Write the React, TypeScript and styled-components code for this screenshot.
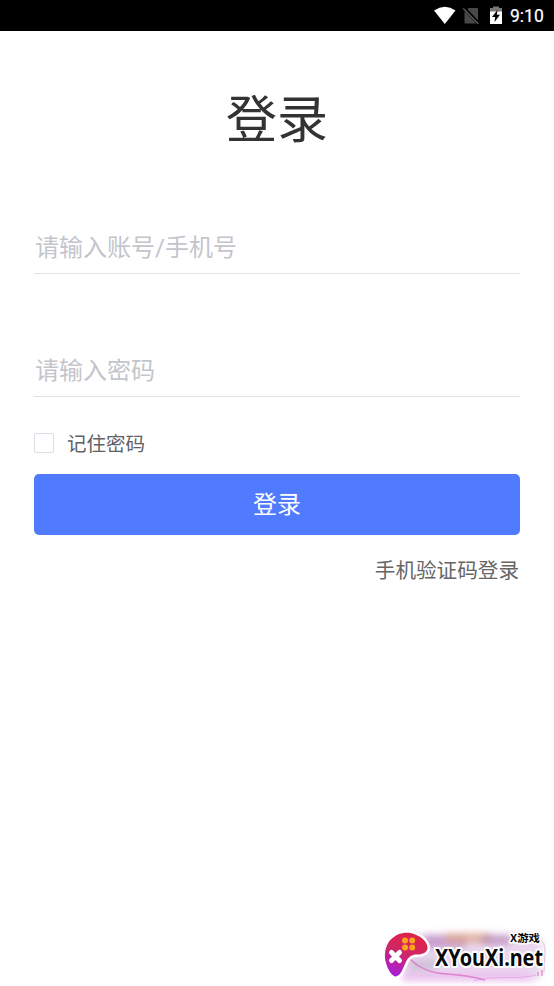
import React from "react";
import styled, { createGlobalStyle } from "styled-components";

const GlobalStyle = createGlobalStyle`
  * { box-sizing: border-box; }
  html, body { margin: 0; padding: 0; background: #fff; }
  body { font-family: Roboto, "Noto Sans CJK SC", sans-serif; overflow: hidden; }
`;

const Screen = styled.div`
  position: relative;
  width: 554px;
  height: 986px;
  background: #fff;
  overflow: hidden;
`;

const StatusBar = styled.header`
  display: flex;
  justify-content: flex-end;
  height: 31px;
  background: #000;
`;

const StatusIcons = styled.svg`
  display: block;
  width: 76px;
  height: 31px;
`;

const Clock = styled.span`
  width: 44px;
  line-height: 33px;
  font-size: 17.5px;
  font-weight: 400;
  -webkit-text-stroke: 0.2px #fff;
  color: #fff;
`;

const Form = styled.form`
  display: flex;
  flex-direction: column;
  padding: 0 34px;
`;

const Title = styled.h1`
  margin: 54px 0 0;
  height: 72px;
  line-height: 72px;
  text-align: center;
  font-size: 51px;
  font-weight: 400;
  color: #333;
`;

const Field = styled.input<{ $gap: number }>`
  display: block;
  width: 100%;
  height: 54px;
  margin-top: ${(p) => p.$gap}px;
  padding: 2px 1px 0;
  border: 0;
  border-bottom: 1.5px solid #e2e2e4;
  border-radius: 0;
  outline: none;
  background: none;
  font: 400 24px Roboto, "Noto Sans CJK SC", sans-serif;
  color: #333;
  &::placeholder { color: #c3c5cb; opacity: 1; }
`;

const Remember = styled.label`
  display: flex;
  align-items: center;
  gap: 13px;
  height: 30px;
  margin-top: 31px;
  font-size: 19.5px;
  color: #606266;
`;

const RememberText = styled.span`
  padding-bottom: 2px;
`;

const Checkbox = styled.input`
  appearance: none;
  width: 20px;
  height: 20px;
  margin: 0;
  border: 1px solid #dcdfe6;
  border-radius: 2px;
  background: #fff;
`;

const SubmitButton = styled.button`
  height: 61px;
  margin-top: 16px;
  padding: 0 0 4px;
  border: 0;
  border-radius: 5px;
  background: #507bff;
  color: #fff;
  font: 400 24px/57px "Noto Sans CJK SC", sans-serif;
`;

const CodeLogin = styled.a`
  align-self: flex-end;
  margin: 21px 1px 0 0;
  line-height: 30px;
  font-size: 20.6px;
  color: #666;
`;

const Watermark = styled.div`
  position: absolute;
  left: 374px;
  top: 920px;
  width: 180px;
  height: 66px;
`;

const WatermarkArt = styled.svg`
  display: block;
  width: 180px;
  height: 66px;
`;

const MarkText = styled.text<{ $size: number }>`
  font-family: ${(p) => (p.$size > 15 ? '"Noto Sans", ' : "")}"Noto Sans CJK SC", sans-serif;
  font-size: ${(p) => p.$size}px;
  font-weight: 700;
  fill: #080808;
  stroke: #fff;
  stroke-width: ${(p) => (p.$size > 15 ? 4 : 3)}px;
  stroke-linejoin: round;
  paint-order: stroke;
`;

function StatusGlyphs() {
  return (
    <StatusIcons viewBox="434 0 76 31">
      <path d="M434 10.5 Q445 3.2 455.5 10.5 L444.8 24 Z" fill="#fff" />
      <path d="M468.5 8H478V23.5H464.5V12Z" fill="#484848" />
      <path d="M463.5 7.5L479 24" stroke="#000" strokeWidth="3.4" />
      <path d="M463.3 8.5L478.3 24" stroke="#5c5c5c" strokeWidth="1.4" />
      <path d="M490 8H493V6.5H499V8H502V12H490Z" fill="#777" />
      <path d="M490 11.5H502V24H490Z" fill="#fff" />
      <path d="M497.6 9.8L492 17H495.2L494.5 22L500 14.7H496.8Z" fill="#000" />
    </StatusIcons>
  );
}

function SiteMark() {
  return (
    <Watermark>
      <WatermarkArt viewBox="0 0 180 66">
        <defs>
          <linearGradient id="pad" x1="0.7" y1="0" x2="0.3" y2="1">
            <stop offset="0" stopColor="#df2443" />
            <stop offset="0.5" stopColor="#cf2669" />
            <stop offset="1" stopColor="#a91dda" />
          </linearGradient>
          <filter id="haze" x="-30%" y="-50%" width="160%" height="200%" colorInterpolationFilters="sRGB">
            <feGaussianBlur stdDeviation="3.5" />
          </filter>
        </defs>
        <g filter="url(#haze)">
          <rect x="28" y="14" width="140" height="47" rx="10" fill="#e9d5ee" opacity=".95" />
          <rect x="50" y="15" width="42" height="13" fill="#bb86c0" opacity=".7" />
          <rect x="72" y="13" width="45" height="10" fill="#dfa58c" opacity=".75" />
          <rect x="108" y="15" width="28" height="10" fill="#b484b6" opacity=".65" />
          <rect x="35" y="40" width="28" height="10" fill="#aaa5b8" opacity=".45" />
          <rect x="28" y="53" width="128" height="8" fill="#ebb4ec" opacity=".7" />
        </g>
        <path d="M36 39C46 49 57 53 73 54S101 57 111 60" fill="none" stroke="#d75ac3" strokeWidth="1.5" opacity=".65" />
        <path d="M99 61C119 55 145 60 162 55" fill="none" stroke="#dc7fdd" strokeWidth="1" opacity=".45" />
        <path d="M158 18Q170 17 171 29L170 52" fill="none" stroke="#d8c9da" strokeWidth="1" />
        <path d="M164 52V56M168 50V56" stroke="#cf72ad" strokeWidth="1" />
        <path d="M20 17C24 13 34 11.5 40 14C48 17 53 22 53.5 27C54 32 49 34.5 43 34.5C37 34.5 34 37 31 44C28 51 26 56 21.5 56.5C16 55.5 10 42 11 34C11.5 26 15 20 20 17Z" fill="url(#pad)" stroke="#fff" strokeWidth="5" paintOrder="stroke" strokeLinejoin="round" />
        <g fill="#fda51f">
          <circle cx="31" cy="20.5" r="3" />
          <circle cx="38.2" cy="20.5" r="3" />
          <circle cx="31" cy="27.5" r="3" />
          <circle cx="38.2" cy="27.5" r="3" />
        </g>
        <path d="M17.5 32.5L25.5 40.5M25.5 32.5L17.5 40.5" stroke="#fff" strokeWidth="5" strokeLinecap="round" />
        <MarkText $size={24} x="61" y="46" textLength="108" lengthAdjust="spacingAndGlyphs">XYouXi.net</MarkText>
        <MarkText $size={10.5} x="136" y="22" textLength="30" lengthAdjust="spacingAndGlyphs">X游戏</MarkText>
      </WatermarkArt>
    </Watermark>
  );
}

export default function App() {
  return (
    <Screen>
      <GlobalStyle />
      <StatusBar>
        <StatusGlyphs />
        <Clock>9:10</Clock>
      </StatusBar>
      <Form onSubmit={(e) => e.preventDefault()}>
        <Title>登录</Title>
        <Field $gap={63} type="text" placeholder="请输入账号/手机号" />
        <Field $gap={69} type="password" placeholder="请输入密码" />
        <Remember>
          <Checkbox type="checkbox" />
          <RememberText>记住密码</RememberText>
        </Remember>
        <SubmitButton type="submit">登录</SubmitButton>
        <CodeLogin>手机验证码登录</CodeLogin>
      </Form>
      <SiteMark />
    </Screen>
  );
}
